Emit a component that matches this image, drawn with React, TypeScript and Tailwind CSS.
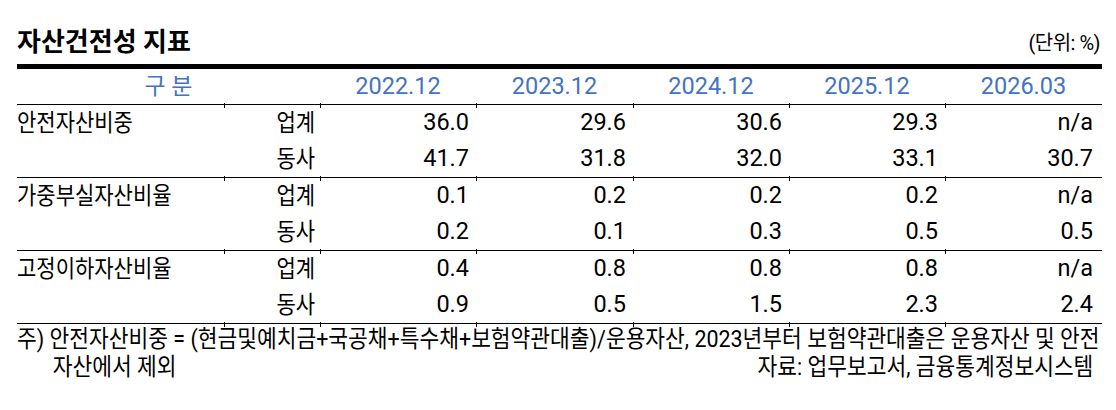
import React from "react";

const years = ["2022.12", "2023.12", "2024.12", "2025.12", "2026.03"];

const groups = [
  {
    label: "안전자산비중",
    rows: [
      { who: "업계", values: ["36.0", "29.6", "30.6", "29.3", "n/a"] },
      { who: "동사", values: ["41.7", "31.8", "32.0", "33.1", "30.7"] },
    ],
  },
  {
    label: "가중부실자산비율",
    rows: [
      { who: "업계", values: ["0.1", "0.2", "0.2", "0.2", "n/a"] },
      { who: "동사", values: ["0.2", "0.1", "0.3", "0.5", "0.5"] },
    ],
  },
  {
    label: "고정이하자산비율",
    rows: [
      { who: "업계", values: ["0.4", "0.8", "0.8", "0.8", "n/a"] },
      { who: "동사", values: ["0.9", "0.5", "1.5", "2.3", "2.4"] },
    ],
  },
];

const cols = "grid grid-cols-[207px_96px_156px_157px_156px_156px_157px]";

// thin rule with the little column ticks left over from the cell borders
const Rule = () => (
  <div className={`${cols} h-0 border-t border-black`}>
    {Array.from({ length: 7 }).map((_, i) => (
      <div key={i} className="h-0">
        {i > 0 && <div className="-mt-[2px] h-[5px] w-px bg-black" />}
      </div>
    ))}
  </div>
);

// the source uses a condensed gothic, so squeeze the hangul a little
const Narrow = ({ children, right }: { children: React.ReactNode; right?: boolean }) => (
  <span
    className={`inline-block whitespace-nowrap scale-x-[0.875] ${right ? "origin-right" : "origin-left"}`}
  >
    {children}
  </span>
);

export default function App() {
  return (
    <div className="w-[1116px] h-[410px] overflow-hidden bg-white pl-[17px] pr-[14px] text-black font-[family-name:Roboto,'Noto_Sans_CJK_KR',sans-serif]">
      <div className="flex h-[64px] items-end justify-between pb-[7px]">
        <h2 className="text-[26px] leading-[30px] font-bold">자산건전성 지표</h2>
        <span className="mr-[2px] text-[20px] leading-[28px] tracking-[-0.5px]">(단위: %)</span>
      </div>
      <div className="h-[5px] bg-black" />

      <div className={`${cols} h-[35px] items-center text-[#4472C4] text-[23.5px] leading-none`}>
        <div className="col-span-2 text-center text-[23px]">구 분</div>
        {years.map((y) => (
          <div key={y} className="text-center">
            {y}
          </div>
        ))}
      </div>

      {groups.map((g) => (
        <div key={g.label}>
          <Rule />
          {g.rows.map((r, ri) => (
            <div key={r.who} className={`${cols} h-[36px] items-center leading-none`}>
              <div className="text-[24px]">{ri === 0 && <Narrow>{g.label}</Narrow>}</div>
              <div className="pr-[5px] text-right text-[24px]">
                <Narrow right>{r.who}</Narrow>
              </div>
              {r.values.map((v, vi) => (
                <div
                  key={vi}
                  className={`text-right text-[23.5px] ${vi === 4 ? "pr-[9px]" : "pr-[7px]"}`}
                >
                  {v}
                </div>
              ))}
            </div>
          ))}
        </div>
      ))}
      <Rule />

      <div className="w-[1214px] origin-left scale-x-[0.894] pt-[1px] text-[24px] leading-[28px]">
        <div className="whitespace-nowrap">
          주) 안전자산비중 = (현금및예치금+국공채+특수채+보험약관대출)/운용자산, 2023년부터 보험약관대출은 운용자산 및 안전
        </div>
        <div className="flex justify-between whitespace-nowrap">
          <span className="pl-[40px]">자산에서 제외</span>
          <span className="pr-[10px]">자료: 업무보고서, 금융통계정보시스템</span>
        </div>
      </div>
    </div>
  );
}
